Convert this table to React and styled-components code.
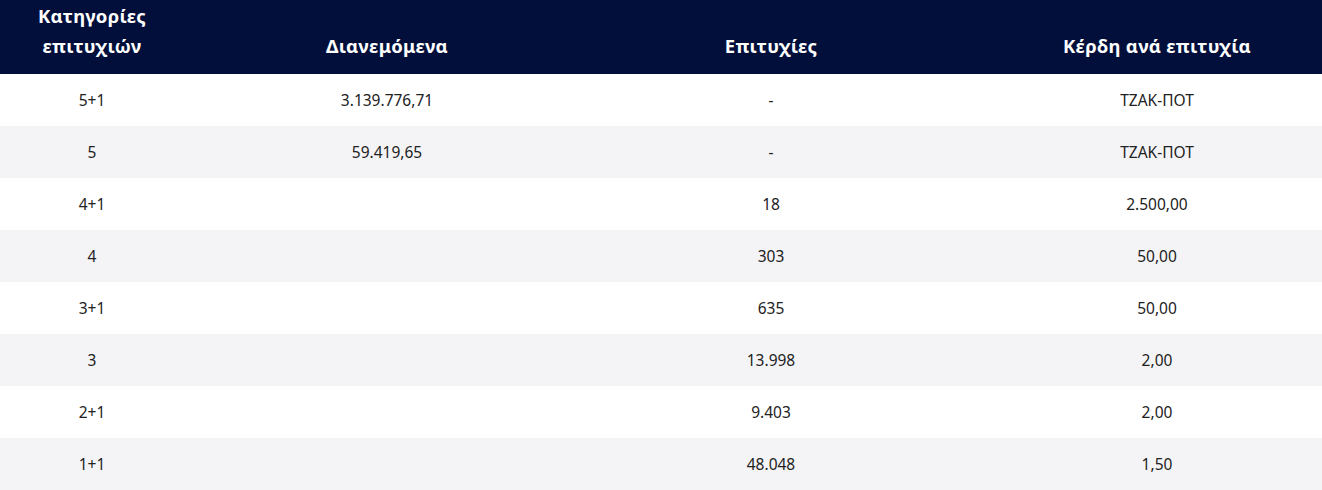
import React from 'react';
import styled, { createGlobalStyle } from 'styled-components';

const GlobalStyle = createGlobalStyle`
    html, body {
        margin: 0;
        padding: 0;
        background: #ffffff;
        overflow: hidden;
    }
    body {
        font-family: "Noto Sans", "Open Sans", "DejaVu Sans", sans-serif;
    }
`

const Table = styled.div`
    width: 1322px;
    overflow: hidden;
`

const Row = styled.div`
    display: grid;
    grid-template-columns: 184px 406px 362px 410px;
    height: ${props => props.head ? '74px' : '52px'};
    background-color: ${props => props.head ? '#020f3b' : props.shade ? '#f4f4f6' : '#ffffff'};
    align-items: ${props => props.head ? 'end' : 'center'};
`

const HeadCell = styled.div`
    color: #ffffff;
    font-weight: 700;
    font-size: 18.5px;
    line-height: 30px;
    letter-spacing: 0.3px;
    text-align: center;
    padding-bottom: 13px;
`

const Cell = styled.div`
    color: #222222;
    font-size: 15.5px;
    text-align: center;
`

const rows = [
    ['5+1', '3.139.776,71', '-', 'ΤΖΑΚ-ΠΟΤ'],
    ['5', '59.419,65', '-', 'ΤΖΑΚ-ΠΟΤ'],
    ['4+1', '', '18', '2.500,00'],
    ['4', '', '303', '50,00'],
    ['3+1', '', '635', '50,00'],
    ['3', '', '13.998', '2,00'],
    ['2+1', '', '9.403', '2,00'],
    ['1+1', '', '48.048', '1,50'],
];

export default function App() {
    return (
        <>
            <GlobalStyle />
            <Table>
                <Row head>
                    <HeadCell>Κατηγορίες<br />επιτυχιών</HeadCell>
                    <HeadCell>Διανεμόμενα</HeadCell>
                    <HeadCell>Επιτυχίες</HeadCell>
                    <HeadCell>Κέρδη ανά επιτυχία</HeadCell>
                </Row>
                {rows.map((r, i) => (
                    <Row key={i} shade={i % 2 === 1}>
                        {r.map((c, j) => <Cell key={j}>{c}</Cell>)}
                    </Row>
                ))}
            </Table>
        </>
    );
}
